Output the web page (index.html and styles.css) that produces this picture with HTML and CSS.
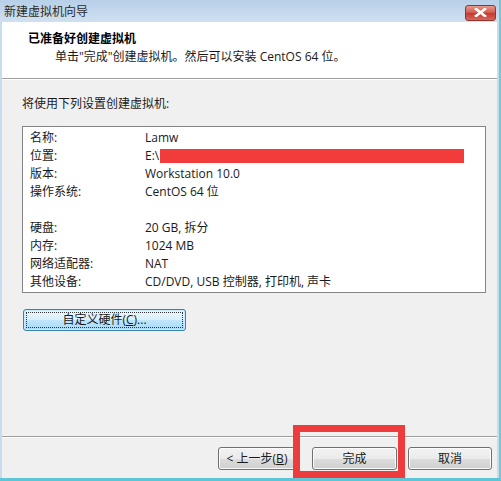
FILE: index.html
```html
<!DOCTYPE html>
<html lang="zh-CN">
<head>
<meta charset="utf-8">
<title>新建虚拟机向导</title>
<link rel="stylesheet" href="styles.css">
</head>
<body>
<div class="window">
  <div class="titlebar">
    <span class="title">新建虚拟机向导</span>
    <span class="close"><svg width="13" height="9" viewBox="0 0 13 9"><path d="M2 1 L11 8 M11 1 L2 8" stroke="#fff" stroke-width="2.6" stroke-linecap="square"/></svg></span>
  </div>
  <div class="client">
    <div class="header">
      <div class="h-title">已准备好创建虚拟机</div>
      <div class="h-sub">单击"完成"创建虚拟机。然后可以安装 CentOS 64 位。</div>
    </div>
    <div class="body">
      <div class="intro">将使用下列设置创建虚拟机:</div>
      <div class="listbox">
        <div class="row"><span class="k">名称:</span><span class="v">Lamw</span></div>
        <div class="row"><span class="k">位置:</span><span class="v">E:\<span class="redact"></span></span></div>
        <div class="row"><span class="k">版本:</span><span class="v">Workstation 10.0</span></div>
        <div class="row"><span class="k">操作系统:</span><span class="v">CentOS 64 位</span></div>
        <div class="row"></div>
        <div class="row"><span class="k">硬盘:</span><span class="v">20 GB, 拆分</span></div>
        <div class="row"><span class="k">内存:</span><span class="v">1024 MB</span></div>
        <div class="row"><span class="k">网络适配器:</span><span class="v">NAT</span></div>
        <div class="row"><span class="k">其他设备:</span><span class="v">CD/DVD, USB 控制器, 打印机, 声卡</span></div>
      </div>
      <div class="custom"><span class="focus">自定义硬件(<u>C</u>)...</span></div>
    </div>
    <div class="footer">
      <span class="btn back">&lt; 上一步(<u>B</u>)</span>
      <span class="btn finish">完成</span>
      <span class="btn cancel">取消</span>
    </div>
    <div class="mark"></div>
  </div>
</div>
</body>
</html>
```
FILE: styles.css
```css
html, body {
  margin: 0;
  padding: 0;
}
body {
  font-family: "Open Sans", "Noto Sans CJK SC", sans-serif;
  font-size: 12px;
  color: #1a1a1a;
}
.window {
  width: 501px;
  height: 481px;
  box-sizing: border-box;
  display: flex;
  flex-direction: column;
  background: #c9dcef;
  border-bottom: 3px solid #5cc6d6;
  border-right: 2px solid #6ccbd8;
  position: relative;
}
.titlebar {
  height: 22px;
  flex: none;
  display: flex;
  align-items: center;
  justify-content: space-between;
  padding: 0 3px 0 4px;
  background: linear-gradient(#b8cfe8, #cfe0f1);
}
.title {
  font-size: 12px;
  color: #2a2a2a;
  line-height: 16px;
  font-family: "Noto Sans CJK SC", sans-serif;
}
.close {
  width: 31px;
  height: 16px;
  box-sizing: border-box;
  border: 1px solid #8a3a32;
  border-radius: 3px;
  background: linear-gradient(#e79a8d, #d2574a 50%, #c2392d 51%, #d7665a);
  display: flex;
  align-items: center;
  justify-content: center;
  margin-top: 3px;
}
.client {
  flex: 1;
  display: flex;
  flex-direction: column;
  margin-left: 2px;
  margin-right: 2px;
  background: #f0f0f0;
  position: relative;
}
.header {
  height: 57px;
  box-sizing: border-box;
  background: #fff;
  border-bottom: 1px solid #a0a0a0;
  box-shadow: 0 1px 0 #fff;
  padding: 8px 0 0 26px;
  font-family: "Noto Sans CJK SC", sans-serif;
}
.h-title {
  font-weight: bold;
  line-height: 16px;
  font-size: 12px;
  color: #000;
}
.h-sub {
  line-height: 16px;
  margin-top: 3px;
  padding-left: 27px;
  font-family: "Open Sans", "Noto Sans CJK SC", sans-serif;
}
.body {
  padding: 17px 0 0 20px;
}
.intro {
  line-height: 16px;
}
.listbox {
  margin-top: 14px;
  width: 464px;
  height: 167px;
  box-sizing: border-box;
  background: #fff;
  border: 1px solid #848484;
  padding: 2px 0 0 7px;
}
.row {
  display: flex;
  height: 18px;
  line-height: 18px;
}
.k {
  width: 115px;
  flex: none;
}
.v {
  display: flex;
  align-items: center;
}
.redact {
  display: inline-block;
  width: 304px;
  height: 14px;
  background: #f23c3c;
  margin-left: 1px;
}
.custom {
  margin: 16px 0 0 1px;
  width: 163px;
  height: 22px;
  box-sizing: border-box;
  border: 1px solid #3c7fb1;
  border-radius: 3px;
  background: linear-gradient(#eaf6fd, #d9f0fc 50%, #bee6fd 51%, #a7d9f5);
  box-shadow: inset 0 0 0 1px #c8eafc;
  padding: 2px;
  display: flex;
}
.focus {
  flex: 1;
  border: 1px dotted #333;
  display: flex;
  align-items: center;
  justify-content: center;
  line-height: 14px;
}
u {
  text-decoration: underline;
}
.footer {
  margin-top: auto;
  border-top: 1px solid #a0a0a0;
  box-shadow: inset 0 1px 0 #fff;
  padding: 10px 5px 8px 0;
  display: flex;
  justify-content: flex-end;
}
.btn {
  height: 23px;
  box-sizing: border-box;
  border: 1px solid #707070;
  border-radius: 3px;
  background: linear-gradient(#f2f2f2, #ebebeb 50%, #dddddd 51%, #cfcfcf);
  box-shadow: inset 0 0 0 1px #fbfbfb;
  display: flex;
  align-items: center;
  justify-content: center;
  line-height: 14px;
}
.back {
  width: 78px;
}
.finish {
  width: 85px;
  margin-left: 16px;
}
.cancel {
  width: 84px;
  margin-left: 11px;
}
.mark {
  position: absolute;
  left: 291px;
  top: 403px;
  width: 112px;
  height: 53px;
  box-sizing: border-box;
  border: 7px solid #ee3b3b;
}
```
